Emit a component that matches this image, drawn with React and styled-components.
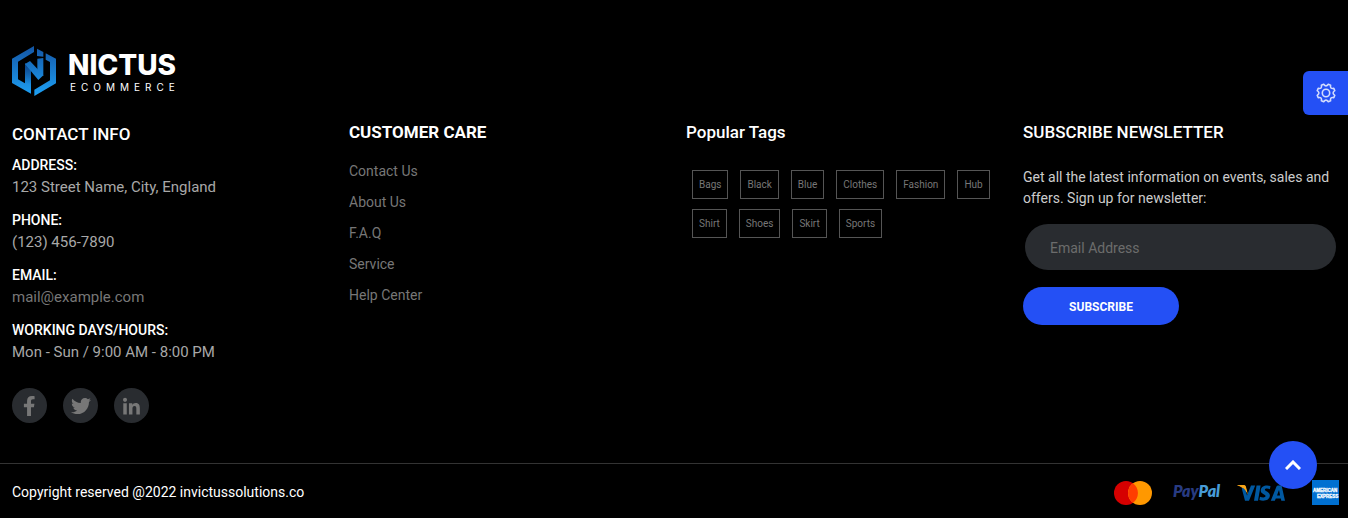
import React from 'react';
import styled, { createGlobalStyle } from 'styled-components';

const GlobalStyle = createGlobalStyle`
  * { box-sizing: border-box; }
  body {
    margin: 0;
    background: #000;
    color: #fff;
    font-family: Roboto, "Liberation Sans", sans-serif;
    font-size: 14px;
    line-height: 21px;
  }
  h2, p, ul, dl, dd { margin: 0; padding: 0; }
  ul { list-style: none; }
  a { text-decoration: none; }
`;

const Footer = styled.footer`
  padding-top: 46px;
`;

const Brand = styled.a`
  display: flex;
  align-items: center;
  gap: 12px;
  margin-left: 12px;
  width: max-content;
  color: #fff;
  font-family: Inter, sans-serif;
`;

const BrandText = styled.span`
  display: flex;
  flex-direction: column;
`;

const BrandName = styled.span`
  font-size: 28px;
  line-height: 32px;
  font-weight: 800;
`;

const BrandSub = styled.span`
  padding-left: 2px;
  font-size: 10px;
  line-height: 12px;
  letter-spacing: 5px;
`;

const Columns = styled.div`
  display: grid;
  grid-template-columns: repeat(4, minmax(0, 1fr));
  padding-top: 24px;
`;

const Column = styled.section`
  padding: 0 12px;
`;

const Heading = styled.h2`
  font-size: 17px;
  line-height: 24px;
  font-weight: ${(p) => (p.$bold ? 700 : 500)};
  padding-top: ${(p) => (p.$low ? 2 : 0)}px;
`;

const Contact = styled.dl`
  padding-top: 8px;
  font-size: 15px;
  line-height: 22px;
`;

const ContactItem = styled.div`
  margin-bottom: 11px;
  dt { font-size: 14px; font-weight: 500; }
  dd { color: #a8a8a8; }
  a { color: #777; }
`;

const Social = styled.ul`
  display: flex;
  gap: 16px;
  padding-top: 14px;
`;

const SocialLink = styled.a`
  display: flex;
  align-items: center;
  justify-content: center;
  width: 35px;
  height: 35px;
  border-radius: 50%;
  background: #292c30;
  color: #777;
`;

const Links = styled.ul`
  display: flex;
  flex-direction: column;
  gap: 10px;
  padding-top: 17px;
  a { color: #777; }
`;

const Tags = styled.ul`
  display: flex;
  flex-wrap: wrap;
  gap: 10px 12px;
  padding: 26px 0 0 6px;
`;

const Tag = styled.a`
  display: block;
  padding: 1px 6px 0;
  border: 1px solid #555;
  color: #777;
  font-size: 10px;
  line-height: 26px;
`;

const Newsletter = styled.form`
  padding-top: 23px;
  p { color: #ccc; }
`;

const EmailInput = styled.input`
  display: block;
  width: calc(100% - 2px);
  height: 46px;
  margin: 15px 0 17px 2px;
  padding: 2px 25px 0;
  border: 0;
  border-radius: 23px;
  background: #292c30;
  color: #fff;
  font: inherit;
  &::placeholder { color: #6c6c6c; opacity: 1; }
`;

const SubscribeButton = styled.button`
  width: 156px;
  height: 38px;
  padding: 2px 0 0;
  border: 0;
  border-radius: 19px;
  background: #2450f5;
  color: #fff;
  font: inherit;
  font-size: 12px;
  font-weight: 700;
`;

const BottomBar = styled.div`
  display: flex;
  align-items: center;
  justify-content: space-between;
  margin-top: 40px;
  padding-left: 12px;
  height: 58px;
  border-top: 1px solid #333;
`;

const Payments = styled.ul`
  display: flex;
  gap: 18px;
  li {
    display: flex;
    justify-content: center;
    align-items: center;
    width: 46px;
  }
  svg { flex: none; }
`;

const SettingsButton = styled.button`
  position: fixed;
  top: 71px;
  right: 0;
  display: flex;
  align-items: center;
  justify-content: center;
  width: 45px;
  height: 44px;
  padding: 0;
  border: 0;
  border-radius: 6px 0 0 6px;
  background: #2450f5;
  color: #d3dcfd;
`;

const TopButton = styled.a`
  position: fixed;
  right: 31px;
  bottom: 29px;
  display: flex;
  align-items: center;
  justify-content: center;
  width: 48px;
  height: 48px;
  border-radius: 50%;
  background: #2450f5;
`;

const contacts = [
  ['ADDRESS:', '123 Street Name, City, England'],
  ['PHONE:', '(123) 456-7890'],
  ['EMAIL:', 'mail@example.com', 'mailto:mail@example.com'],
  ['WORKING DAYS/HOURS:', 'Mon - Sun / 9:00 AM - 8:00 PM'],
];

const socials = [
  ['Facebook', '0 0 320 512', 'M279.14 288l14.22-92.66h-88.91v-60.13c0-25.35 12.42-50.06 52.24-50.06h40.42V6.26S260.43 0 225.36 0c-73.22 0-121.08 44.38-121.08 124.72v70.62H22.89V288h81.39v224h100.17V288z'],
  ['Twitter', '0 0 512 512', 'M459.37 151.716c.325 4.548.325 9.097.325 13.645 0 138.72-105.583 298.558-298.558 298.558-59.452 0-114.68-17.219-161.137-47.106 8.447.974 16.568 1.299 25.34 1.299 49.055 0 94.213-16.568 130.274-44.832-46.132-.975-84.792-31.188-98.112-72.772 6.498.974 12.995 1.624 19.818 1.624 9.421 0 18.843-1.3 27.614-3.573-48.081-9.747-84.143-51.98-84.143-102.985v-1.299c13.969 7.797 30.214 12.67 47.431 13.319-28.264-18.843-46.781-51.005-46.781-87.391 0-19.492 5.197-37.36 14.294-52.954 51.655 63.675 129.3 105.258 216.365 109.807-1.624-7.797-2.599-15.918-2.599-24.04 0-57.828 46.782-104.934 104.934-104.934 30.213 0 57.502 12.67 76.67 33.137 23.715-4.548 46.456-13.32 66.599-25.34-7.798 24.366-24.366 44.833-46.132 57.827 21.117-2.273 41.584-8.122 60.426-16.243-14.292 20.791-32.161 39.308-52.628 54.253z'],
  ['LinkedIn', '0 -45 448 532', 'M100.28 448H7.4V148.9h92.88zM53.79 108.1C24.09 108.1 0 83.5 0 53.8a53.79 53.79 0 0 1 107.58 0c0 29.7-24.1 54.3-53.79 54.3zM447.9 448h-92.68V302.4c0-34.7-.7-79.2-48.29-79.2-48.29 0-55.69 37.7-55.69 76.7V448h-92.78V148.9h89.08v40.8h1.3c12.4-23.5 42.69-48.3 87.88-48.3 94 0 111.28 61.9 111.28 142.3V448z'],
];

const links = ['Contact Us', 'About Us', 'F.A.Q', 'Service', 'Help Center'];
const tags = ['Bags', 'Black', 'Blue', 'Clothes', 'Fashion', 'Hub', 'Shirt', 'Shoes', 'Skirt', 'Sports'];

function LogoMark() {
  return (
    <svg width="44" height="50" viewBox="0 0 132 150" aria-hidden="true">
      <defs>
        <linearGradient id="mark" x1="0" y1="0" x2="0" y2="150" gradientUnits="userSpaceOnUse">
          <stop offset="0" stopColor="#1456a5" />
          <stop offset="1" stopColor="#1da1f5" />
        </linearGradient>
        <linearGradient id="fold" x1="0" y1="48" x2="0" y2="115" gradientUnits="userSpaceOnUse">
          <stop offset="0" stopColor="#0b3f80" />
          <stop offset="1" stopColor="#0b3f80" stopOpacity="0" />
        </linearGradient>
      </defs>
      <g fill="url(#mark)">
        <path d="M66 0V18L18 47V100L39 112V52L57 62V143L0 111V38Z" />
        <path d="M75 8L94 18V32L75 30Z" />
        <path d="M76 38L94 36V90L76 76Z" />
        <path d="M101 22L132 38V112L67 150V131L114 103V48L101 41Z" />
      </g>
      <path d="M39 54L57 62V115L39 112Z" fill="url(#fold)" />
      <path d="M39 54L54 45L94 88L79 102Z" fill="url(#mark)" />
    </svg>
  );
}

function Mastercard() {
  return (
    <svg width="38" height="24" viewBox="0 0 38 24" role="img" aria-label="Mastercard">
      <circle cx="12" cy="12" r="12" fill="#d60000" />
      <circle cx="26" cy="12" r="12" fill="#ff9800" />
      <path d="M19 2.3a12 12 0 0 1 0 19.4a12 12 0 0 1 0-19.4z" fill="#ff3d00" />
    </svg>
  );
}

function PayPal() {
  return (
    <svg width="50" height="26" viewBox="0 0 50 26" role="img" aria-label="PayPal">
      <text x="1" y="17" fontFamily="Lato, sans-serif" fontSize="16" fontWeight="800" fontStyle="italic">
        <tspan fill="#283b82">Pay</tspan>
        <tspan fill="#479bd7">Pal</tspan>
      </text>
    </svg>
  );
}

function Visa() {
  return (
    <svg width="48" height="16" viewBox="0 0 48 16" role="img" aria-label="Visa">
      <path d="M0 0h6.500q2 0 2.500 2l2 8q-3-7-11-10z" fill="#faa61a" />
      <path d="M7.500 1L10 10.500L14 .5h4.200L12 15.700H8L4.800 3.500z" fill="#0058a0" />
      <path d="M0 0h6.500q2 0 2.300 2l1 5q-3-5-9.800-7z" fill="#faa61a" />
      <path d="M19.600 .5h4L21 15.700h-4z" fill="#0058a0" />
      <path d="M33.500 1l-.6 3.200c-2-.9-5-.9-5 .5 0 1.600 5 2 5 5.600 0 5.100-6 6.400-10.500 4.800l.6-3.400c2.300 1.200 5.600 1.100 5.600-.6 0-1.700-4.900-1.900-4.900-5.500 0-4.700 5.500-6.200 9.800-4.600z" fill="#0058a0" />
      <path d="M41 .5h3.600L48 15.700h-3.700l-.5-2.300h-5l-1 2.300h-4L39.500 1.600Q40 .5 41 .5zm1 4.500l-2 5.400h3.100z" fill="#0058a0" />
    </svg>
  );
}

function Amex() {
  return (
    <svg width="27" height="25" viewBox="0 0 27 25" role="img" aria-label="American Express">
      <path d="M0 0h27v25H0z" fill="#0070d1" />
      <g fill="#fff" stroke="#fff" strokeWidth=".3" fontFamily="Liberation Sans, sans-serif" fontWeight="700" fontSize="4.5">
        <text x="1" y="12">AMERICAN</text>
        <text x="5" y="17.500">EXPRESS</text>
      </g>
    </svg>
  );
}

const payments = [Mastercard, PayPal, Visa, Amex];

export default function App() {
  return (
    <>
      <GlobalStyle />
      <Footer>
        <Brand href="#">
          <LogoMark />
          <BrandText>
            <BrandName>NICTUS</BrandName>
            <BrandSub>ECOMMERCE</BrandSub>
          </BrandText>
        </Brand>
        <Columns>
          <Column>
            <Heading $low>CONTACT INFO</Heading>
            <Contact>
              {contacts.map(([label, value, href]) => (
                <ContactItem key={label}>
                  <dt>{label}</dt>
                  <dd>{href ? <a href={href}>{value}</a> : value}</dd>
                </ContactItem>
              ))}
            </Contact>
            <Social>
              {socials.map(([name, viewBox, path]) => (
                <li key={name}>
                  <SocialLink href="#" aria-label={name}>
                    <svg height="20" viewBox={viewBox} fill="currentColor">
                      <path d={path} />
                    </svg>
                  </SocialLink>
                </li>
              ))}
            </Social>
          </Column>
          <Column>
            <Heading $bold>CUSTOMER CARE</Heading>
            <Links>
              {links.map((text) => (
                <li key={text}><a href="#">{text}</a></li>
              ))}
            </Links>
          </Column>
          <Column>
            <Heading>Popular Tags</Heading>
            <Tags>
              {tags.map((text) => (
                <li key={text}><Tag href="#">{text}</Tag></li>
              ))}
            </Tags>
          </Column>
          <Column>
            <Heading>SUBSCRIBE NEWSLETTER</Heading>
            <Newsletter>
              <p>Get all the latest information on events, sales and offers. Sign up for newsletter:</p>
              <EmailInput type="email" placeholder="Email Address" aria-label="Email Address" />
              <SubscribeButton type="button">SUBSCRIBE</SubscribeButton>
            </Newsletter>
          </Column>
        </Columns>
        <BottomBar>
          <p>Copyright reserved @2022 invictussolutions.co</p>
          <Payments>
            {payments.map((Logo) => (
              <li key={Logo.name}><Logo /></li>
            ))}
          </Payments>
        </BottomBar>
      </Footer>
      <SettingsButton type="button" aria-label="Settings">
        <svg width="22" height="22" viewBox="0 0 22 22" fill="none" stroke="currentColor" strokeWidth="1.600" strokeLinejoin="round">
          <circle cx="11" cy="11" r="3.700" />
          <path d="M8.700 2.200Q11 5.600 13.300 2.200L15.600 3.200Q14.800 7.200 18.800 6.400L19.800 8.700Q16.400 11 19.800 13.300L18.800 15.600Q14.800 14.800 15.600 18.800L13.300 19.800Q11 16.400 8.700 19.800L6.400 18.800Q7.200 14.800 3.200 15.600L2.200 13.300Q5.600 11 2.200 8.700L3.200 6.400Q7.200 7.200 6.400 3.200Z" />
        </svg>
      </SettingsButton>
      <TopButton href="#" aria-label="Back to top">
        <svg width="16" height="10" viewBox="0 0 16 10" fill="none" stroke="#fff" strokeWidth="3">
          <path d="M1 9L8 2l7 7" />
        </svg>
      </TopButton>
    </>
  );
}
